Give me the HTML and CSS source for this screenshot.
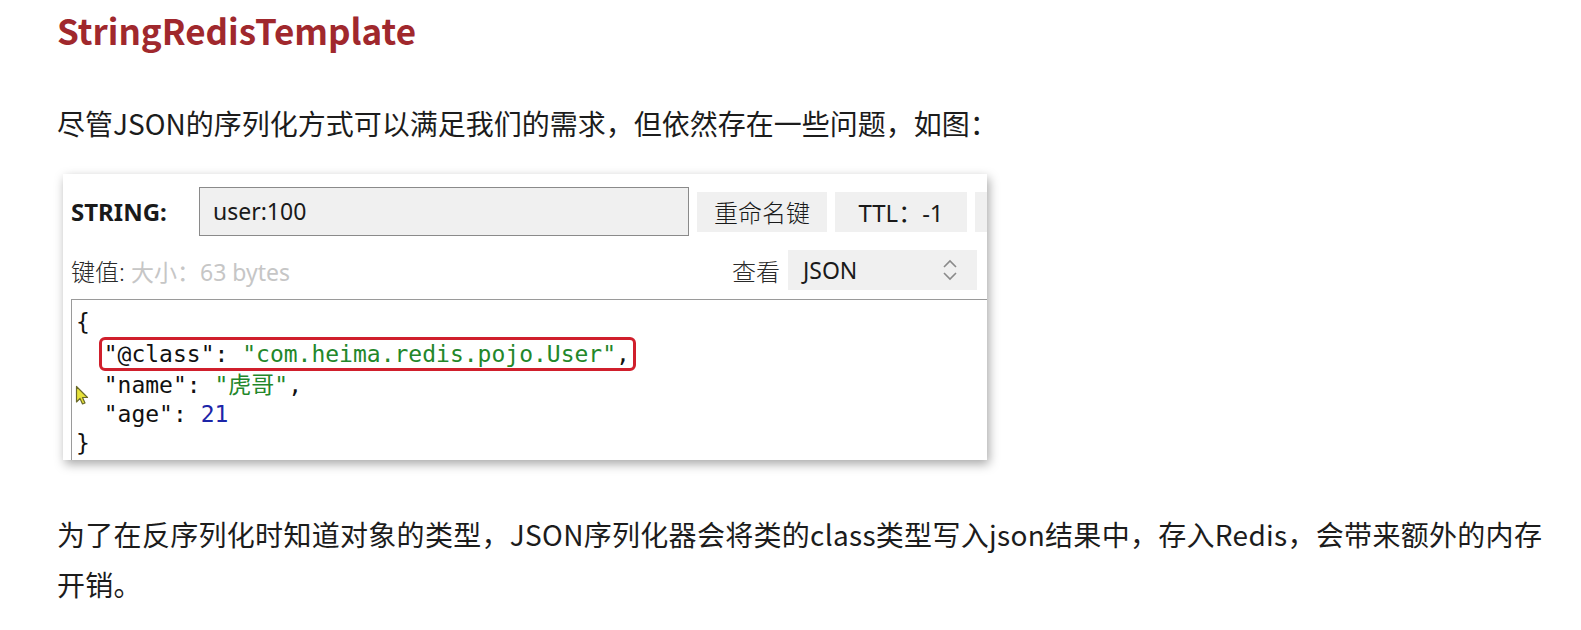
FILE: index.html
```html
<!DOCTYPE html>
<html lang="zh-CN">
<head>
<meta charset="utf-8">
<title>StringRedisTemplate</title>
<link rel="stylesheet" href="styles.css">
</head>
<body>
<main class="doc">
  <h2 class="title">StringRedisTemplate</h2>
  <p class="para p1">尽管JSON的序列化方式可以满足我们的需求，但依然存在一些问题，如图：</p>
  <figure class="shot">
    <div class="row row-key">
      <span class="type-label">STRING:</span>
      <div class="key-input">user:100</div>
      <button class="btn btn-rename">重命名键</button>
      <button class="btn btn-ttl">TTL：-1</button>
      <button class="btn btn-cut"></button>
    </div>
    <div class="row row-value">
      <div class="value-info">
        <span class="value-label">键值:</span>
        <span class="size-info">大小：63 bytes</span>
      </div>
      <div class="view-ctrl">
        <span class="view-label">查看</span>
        <div class="select">
          <span>JSON</span>
          <svg class="chev" width="18" height="28" viewBox="0 0 18 28">
            <path d="M3 11 L9 5 L15 11" fill="none" stroke="#8a8a8a" stroke-width="1.6"/>
            <path d="M3 17 L9 23 L15 17" fill="none" stroke="#8a8a8a" stroke-width="1.6"/>
          </svg>
        </div>
      </div>
    </div>
    <div class="editor">
      <div class="ln">{</div>
      <div class="ln">  <span class="hl">"@class": <span class="str">"com.heima.redis.pojo.User"</span>,</span></div>
      <div class="ln">  "name": <span class="str">"虎哥"</span>,</div>
      <div class="ln">  "age": <span class="num">21</span></div>
      <div class="ln">}</div>
      <svg class="cursor" width="14" height="21" viewBox="0 0 14 21">
        <path d="M1.5 1.5 L1.5 17 L5 13.5 L7.5 19 L10 18 L7.5 12.5 L12.5 12.5 Z" fill="#e6e23a" stroke="#6b6a2a" stroke-width="1.2" stroke-linejoin="round"/>
      </svg>
    </div>
  </figure>
  <p class="para p2">为了在反序列化时知道对象的类型，JSON序列化器会将类的class类型写入json结果中，存入Redis，会带来额外的内存开销。</p>
</main>
</body>
</html>
```
FILE: styles.css
```css
html, body {
  margin: 0;
  padding: 0;
  background: #ffffff;
}

.doc {
  padding: 5px 30px 0 57px;
  font-family: "Noto Sans CJK SC", "Noto Sans", sans-serif;
  color: #1c1c1c;
}

.title {
  margin: 0;
  font-size: 35px;
  line-height: 50px;
  font-weight: 700;
  color: #a0282d;
}

.para {
  margin: 0;
  font-size: 28px;
  line-height: 50px;
}

.p1 {
  margin-top: 43px;
}

.p2 {
  margin-top: 49px;
  letter-spacing: 0.3px;
}

/* screenshot */
.shot {
  margin: 26px 0 0 6px;
  width: 924px;
  height: 286px;
  background: #ffffff;
  box-shadow: 2px 4px 10px rgba(0, 0, 0, 0.35);
  overflow: hidden;
  position: relative;
  font-family: "Noto Sans", "Noto Sans CJK SC", sans-serif;
  color: #1a1a1a;
}

.row {
  display: flex;
  align-items: center;
}

.row-key {
  padding: 13px 0 0 8px;
  gap: 8px;
  white-space: nowrap;
}

.type-label {
  flex: none;
  width: 120px;
  font-weight: 700;
  font-size: 24px;
}

.key-input {
  box-sizing: border-box;
  width: 490px;
  height: 49px;
  flex: none;
  background: #f0f0f0;
  border: 1px solid #8a8a8a;
  padding-left: 13px;
  font-size: 23px;
  line-height: 47px;
}

.btn {
  flex: none;
  height: 40px;
  border: none;
  background: #f0f0f0;
  font-family: "Noto Sans", "Noto Sans CJK SC", sans-serif;
  font-size: 24px;
  color: #1a1a1a;
  padding: 0;
}

.btn-rename {
  width: 130px;
  font-weight: 300;
}

.btn-ttl {
  width: 132px;
}

.btn-cut {
  width: 40px;
}

.row-value {
  justify-content: space-between;
  padding: 14px 10px 0 8px;
  height: 40px;
}

.value-label {
  font-size: 24px;
  color: #2a2a2a;
  font-weight: 300;
}

.size-info {
  font-size: 23px;
  color: #c6c6c6;
  margin-left: 2px;
}

.view-ctrl {
  display: flex;
  align-items: center;
  gap: 8px;
}

.view-label {
  font-size: 24px;
  font-weight: 300;
  color: #2a2a2a;
}

.select {
  box-sizing: border-box;
  width: 189px;
  height: 40px;
  background: #f0f0f0;
  display: flex;
  align-items: center;
  justify-content: space-between;
  padding: 0 18px 0 15px;
  font-size: 23px;
}

.chev {
  display: block;
}

.editor {
  position: relative;
  margin: 9px 0 0 8px;
  border-left: 1px solid #9a9a9a;
  border-top: 1px solid #9a9a9a;
  height: 200px;
  padding: 8px 0 0 4px;
  font-family: "DejaVu Sans Mono", "Noto Sans CJK SC", monospace;
  font-size: 23px;
  color: #111111;
}

.ln {
  line-height: 29px;
  white-space: pre;
}

.hl {
  display: inline-block;
  border: 3px solid #d01f2c;
  border-radius: 6px;
  margin-left: -5px;
  padding: 0 3px 0 2px;
  line-height: 28px;
}

.str {
  color: #23872a;
}

.num {
  color: #1c25a8;
}

.cursor {
  position: absolute;
  left: 3px;
  top: 85px;
}
```
